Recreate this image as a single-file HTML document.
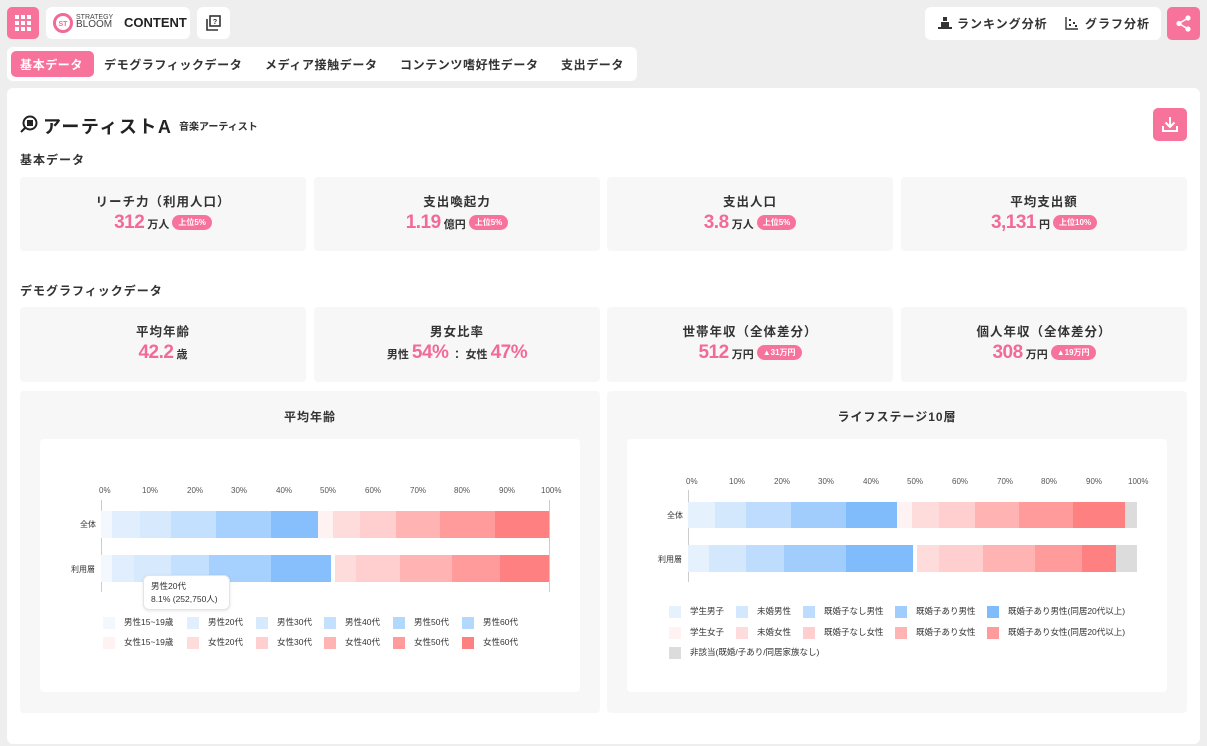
<!DOCTYPE html><html><head><meta charset="utf-8"><style>
*{margin:0;padding:0;box-sizing:border-box}
body{width:1207px;height:746px;background:#eeeeee;font-family:"Liberation Sans","Noto Sans CJK JP",sans-serif;color:#333;position:relative;overflow:hidden}
.a{position:absolute}
.pk{background:#f7739c;border-radius:5px}
.w{background:#fff;border-radius:6px}
.card{position:absolute;background:#f7f7f7;border-radius:4px;text-align:center}
.ct{font-size:12.5px;font-weight:bold;letter-spacing:1px;margin-top:14px}
.cv{margin-top:2px;font-size:11px;font-weight:bold;color:#333}
.cv b{color:#f26a96;font-size:19px;letter-spacing:-.5px}
.bd{display:inline-block;background:#f7739c;color:#fff;font-size:8px;border-radius:8px;padding:2px 6px;vertical-align:3px;margin-left:3px}
.ax{position:absolute;font-size:8px;color:#555;top:0}
.seg{position:absolute;height:100%;top:0}
.lg{position:absolute;font-size:8.5px;color:#333;white-space:nowrap}
.lg i{display:inline-block;width:12px;height:12px;vertical-align:middle;margin-right:9px}
</style></head><body>
<div class="a pk" style="left:7px;top:7px;width:32px;height:32px">
<svg width="32" height="32"><g fill="#fff"><rect x="8" y="8" width="4" height="4"/><rect x="14" y="8" width="4" height="4"/><rect x="20" y="8" width="4" height="4"/><rect x="8" y="14" width="4" height="4"/><rect x="14" y="14" width="4" height="4"/><rect x="20" y="14" width="4" height="4"/><rect x="8" y="20" width="4" height="4"/><rect x="14" y="20" width="4" height="4"/><rect x="20" y="20" width="4" height="4"/></g></svg></div>
<div class="a w" style="left:46px;top:7px;width:144px;height:32px">
<svg class="a" style="left:7px;top:6px" width="20" height="20"><circle cx="10" cy="10" r="8.5" fill="none" stroke="#f26a96" stroke-width="3"/><text x="10" y="13" font-size="7" text-anchor="middle" fill="#f26a96" font-family="Liberation Sans" font-weight="bold">ST</text></svg>
<div class="a" style="left:30px;top:7px;font-size:7px;line-height:7px;color:#444">STRATEGY<br><span style="font-size:10px">BLOOM</span></div>
<div class="a" style="left:78px;top:8px;font-size:13px;font-weight:bold;color:#222">CONTENT</div></div>
<div class="a w" style="left:197px;top:7px;width:33px;height:32px">
<svg class="a" style="left:9px;top:8px" width="16" height="16"><rect x="4" y="1" width="10" height="10" fill="none" stroke="#333" stroke-width="1.6"/><path d="M1 4v11h11" fill="none" stroke="#333" stroke-width="1.6"/><text x="9" y="9" font-size="7" text-anchor="middle" fill="#333" font-weight="bold">?</text></svg></div>
<div class="a w" style="left:925px;top:7px;width:236px;height:33px">
<svg class="a" style="left:13px;top:9px" width="14" height="14"><rect x="5" y="1" width="4" height="4" fill="#333"/><rect x="3" y="6" width="8" height="5" fill="#333"/><rect x="0" y="11" width="14" height="2" fill="#333"/></svg>
<div class="a" style="left:32px;top:8px;font-size:12px;font-weight:bold;letter-spacing:1px">ランキング分析</div>
<svg class="a" style="left:140px;top:9px" width="14" height="14"><path d="M1 1v12h12" fill="none" stroke="#333" stroke-width="1.4"/><g fill="#333"><rect x="4" y="3" width="2" height="2"/><rect x="4" y="8" width="2" height="2"/><rect x="8" y="6" width="2" height="2"/><rect x="10" y="9" width="2" height="2"/></g></svg>
<div class="a" style="left:160px;top:8px;font-size:12px;font-weight:bold;letter-spacing:1px">グラフ分析</div></div>
<div class="a pk" style="left:1167px;top:7px;width:33px;height:33px">
<svg width="33" height="33"><g fill="#fff"><circle cx="21" cy="11" r="2.6"/><circle cx="12" cy="16.5" r="2.6"/><circle cx="21" cy="22" r="2.6"/></g><path d="M21 11L12 16.5L21 22" stroke="#fff" stroke-width="1.6" fill="none"/></svg></div>
<div class="a w" style="left:7px;top:47px;width:630px;height:34px"></div>
<div class="a pk" style="left:11px;top:51px;width:83px;height:26px"></div>
<div class="a" style="left:20px;top:56px;font-size:12px;font-weight:bold;letter-spacing:.6px;color:#fff">基本データ</div>
<div class="a" style="left:104px;top:56px;font-size:12px;font-weight:bold;letter-spacing:.6px;color:#333">デモグラフィックデータ</div>
<div class="a" style="left:265px;top:56px;font-size:12px;font-weight:bold;letter-spacing:.6px">メディア接触データ</div>
<div class="a" style="left:400px;top:56px;font-size:12px;font-weight:bold;letter-spacing:.6px">コンテンツ嗜好性データ</div>
<div class="a" style="left:561px;top:56px;font-size:12px;font-weight:bold;letter-spacing:.6px">支出データ</div>
<div class="a w" style="left:7px;top:88px;width:1193px;height:656px"></div>
<svg class="a" style="left:20px;top:115px" width="18" height="18"><circle cx="10" cy="8" r="6.5" fill="none" stroke="#222" stroke-width="2"/><rect x="7" y="5" width="6" height="6" fill="#222"/><path d="M5 13L1 17" stroke="#222" stroke-width="2"/></svg>
<div class="a" style="left:43px;top:113px;font-size:18px;font-weight:bold;letter-spacing:1.5px;color:#222">アーティストA</div>
<div class="a" style="left:179px;top:118px;font-size:10px;font-weight:bold">音楽アーティスト</div>
<div class="a pk" style="left:1153px;top:108px;width:34px;height:33px">
<svg width="34" height="33"><path d="M17 9v10M12.5 14.5L17 19l4.5-4.5M10 18v5h14v-5" stroke="#fff" stroke-width="2" fill="none"/></svg></div>
<div class="a" style="left:20px;top:151px;font-size:12px;font-weight:bold;letter-spacing:1px">基本データ</div>
<div class="card" style="left:20px;top:177px;width:286px;height:74px"><div class="ct">リーチ力（利用人口）</div><div class="cv"><b>312</b> 万人<span class="bd">上位5%</span></div></div>
<div class="card" style="left:314px;top:177px;width:286px;height:74px"><div class="ct">支出喚起力</div><div class="cv"><b>1.19</b> 億円<span class="bd">上位5%</span></div></div>
<div class="card" style="left:607px;top:177px;width:286px;height:74px"><div class="ct">支出人口</div><div class="cv"><b>3.8</b> 万人<span class="bd">上位5%</span></div></div>
<div class="card" style="left:901px;top:177px;width:286px;height:74px"><div class="ct">平均支出額</div><div class="cv"><b>3,131</b> 円<span class="bd">上位10%</span></div></div>
<div class="a" style="left:20px;top:282px;font-size:12px;font-weight:bold;letter-spacing:1px">デモグラフィックデータ</div>
<div class="card" style="left:20px;top:307px;width:286px;height:75px"><div class="ct">平均年齢</div><div class="cv"><b>42.2</b> 歳</div></div>
<div class="card" style="left:314px;top:307px;width:286px;height:75px"><div class="ct">男女比率</div><div class="cv">男性 <b>54%</b> ： 女性 <b>47%</b></div></div>
<div class="card" style="left:607px;top:307px;width:286px;height:75px"><div class="ct">世帯年収（全体差分）</div><div class="cv"><b>512</b> 万円<span class="bd">▲31万円</span></div></div>
<div class="card" style="left:901px;top:307px;width:286px;height:75px"><div class="ct">個人年収（全体差分）</div><div class="cv"><b>308</b> 万円<span class="bd">▲19万円</span></div></div>
<div class="card" style="left:20px;top:391px;width:580px;height:322px"><div class="ct" style="margin-top:17px;font-size:12px">平均年齢</div></div>
<div class="card" style="left:607px;top:391px;width:580px;height:322px"><div class="ct" style="margin-top:17px;font-size:12px">ライフステージ10層</div></div>
<div class="a" style="left:40px;top:439px;width:540px;height:253px;background:#fff;border-radius:4px"></div>
<div class="a" style="left:627px;top:439px;width:540px;height:253px;background:#fff;border-radius:4px"></div>

<div class="a" style="left:0;top:486px">
<span class="ax" style="left:99px">0%</span><span class="ax" style="left:142px">10%</span><span class="ax" style="left:187px">20%</span><span class="ax" style="left:231px">30%</span><span class="ax" style="left:276px">40%</span><span class="ax" style="left:320px">50%</span><span class="ax" style="left:365px">60%</span><span class="ax" style="left:410px">70%</span><span class="ax" style="left:454px">80%</span><span class="ax" style="left:499px">90%</span><span class="ax" style="left:541px">100%</span></div>
<div class="a" style="left:101px;top:500px;width:1px;height:92px;background:#ccc"></div>
<div class="a" style="left:549px;top:500px;width:1px;height:92px;background:#ccc"></div>
<div class="a" style="left:80px;top:519px;font-size:8px">全体</div>
<div class="a" style="left:71px;top:564px;font-size:8px">利用層</div>
<div class="a" style="left:0;top:511px;height:27px;width:0">
<div class="seg" style="left:101px;width:11px;background:#f3f8ff"></div><div class="seg" style="left:112px;width:28px;background:#e1eefd"></div><div class="seg" style="left:140px;width:31px;background:#d6e9fd"></div><div class="seg" style="left:171px;width:45px;background:#c3e0fe"></div><div class="seg" style="left:216px;width:55px;background:#a6d0fd"></div><div class="seg" style="left:271px;width:47px;background:#86bffb"></div><div class="seg" style="left:318px;width:15px;background:#fff2f2"></div><div class="seg" style="left:333px;width:27px;background:#ffdcdc"></div><div class="seg" style="left:360px;width:36px;background:#ffcfcf"></div><div class="seg" style="left:396px;width:44px;background:#ffb3b3"></div><div class="seg" style="left:440px;width:55px;background:#ff9b9b"></div><div class="seg" style="left:495px;width:54px;background:#ff8080"></div></div>
<div class="a" style="left:0;top:555px;height:27px;width:0">
<div class="seg" style="left:101px;width:11px;background:#f3f8ff"></div><div class="seg" style="left:112px;width:22px;background:#e1eefd"></div><div class="seg" style="left:134px;width:37px;background:#d6e9fd"></div><div class="seg" style="left:171px;width:38px;background:#c3e0fe"></div><div class="seg" style="left:209px;width:62px;background:#a6d0fd"></div><div class="seg" style="left:271px;width:60px;background:#86bffb"></div><div class="seg" style="left:335px;width:21px;background:#ffdcdc"></div><div class="seg" style="left:356px;width:44px;background:#ffcfcf"></div><div class="seg" style="left:400px;width:52px;background:#ffb3b3"></div><div class="seg" style="left:452px;width:48px;background:#ff9b9b"></div><div class="seg" style="left:500px;width:49px;background:#ff8080"></div></div>
<div class="a" style="left:143px;top:575px;width:87px;height:35px;background:#fff;border:1px solid #e4e4e4;border-radius:6px;box-shadow:0 1px 3px rgba(0,0,0,.1);font-size:8.5px;line-height:13px;padding:4px 7px;color:#333">男性20代<br>8.1% (252,750人)</div>
<div class="lg" style="left:103px;top:616px"><i style="background:#f3f8ff"></i>男性15~19歳</div>
<div class="lg" style="left:187px;top:616px"><i style="background:#e1eefd"></i>男性20代</div>
<div class="lg" style="left:256px;top:616px"><i style="background:#d6e9fd"></i>男性30代</div>
<div class="lg" style="left:324px;top:616px"><i style="background:#c3e0fe"></i>男性40代</div>
<div class="lg" style="left:393px;top:616px"><i style="background:#b3d8fe"></i>男性50代</div>
<div class="lg" style="left:462px;top:616px"><i style="background:#b3d8fe"></i>男性60代</div>
<div class="lg" style="left:103px;top:636px"><i style="background:#fff2f2"></i>女性15~19歳</div>
<div class="lg" style="left:187px;top:636px"><i style="background:#ffdcdc"></i>女性20代</div>
<div class="lg" style="left:256px;top:636px"><i style="background:#ffcfcf"></i>女性30代</div>
<div class="lg" style="left:324px;top:636px"><i style="background:#ffb3b3"></i>女性40代</div>
<div class="lg" style="left:393px;top:636px"><i style="background:#ff9b9b"></i>女性50代</div>
<div class="lg" style="left:462px;top:636px"><i style="background:#ff8080"></i>女性60代</div>

<div class="a" style="left:587px;top:477px">
<span class="ax" style="left:99px">0%</span><span class="ax" style="left:142px">10%</span><span class="ax" style="left:187px">20%</span><span class="ax" style="left:231px">30%</span><span class="ax" style="left:276px">40%</span><span class="ax" style="left:320px">50%</span><span class="ax" style="left:365px">60%</span><span class="ax" style="left:410px">70%</span><span class="ax" style="left:454px">80%</span><span class="ax" style="left:499px">90%</span><span class="ax" style="left:541px">100%</span></div>
<div class="a" style="left:688px;top:490px;width:1px;height:92px;background:#ccc"></div>
<div class="a" style="left:667px;top:510px;font-size:8px">全体</div>
<div class="a" style="left:658px;top:554px;font-size:8px">利用層</div>
<div class="a" style="left:0;top:502px;height:26px;width:0">
<div class="seg" style="left:688px;width:27px;background:#e6f1fe"></div><div class="seg" style="left:715px;width:31px;background:#d3e7fd"></div><div class="seg" style="left:746px;width:45px;background:#bedcfe"></div><div class="seg" style="left:791px;width:55px;background:#a1cdfd"></div><div class="seg" style="left:846px;width:51px;background:#80bcfb"></div><div class="seg" style="left:897px;width:15px;background:#fff2f2"></div><div class="seg" style="left:912px;width:27px;background:#ffdcdc"></div><div class="seg" style="left:939px;width:36px;background:#ffcfcf"></div><div class="seg" style="left:975px;width:44px;background:#ffb3b3"></div><div class="seg" style="left:1019px;width:54px;background:#ff9b9b"></div><div class="seg" style="left:1073px;width:52px;background:#ff8080"></div><div class="seg" style="left:1125px;width:12px;background:#dcdcdc"></div></div>
<div class="a" style="left:0;top:545px;height:27px;width:0">
<div class="seg" style="left:688px;width:21px;background:#e6f1fe"></div><div class="seg" style="left:709px;width:37px;background:#d3e7fd"></div><div class="seg" style="left:746px;width:38px;background:#bedcfe"></div><div class="seg" style="left:784px;width:62px;background:#a1cdfd"></div><div class="seg" style="left:846px;width:67px;background:#80bcfb"></div><div class="seg" style="left:917px;width:22px;background:#ffdcdc"></div><div class="seg" style="left:939px;width:44px;background:#ffcfcf"></div><div class="seg" style="left:983px;width:52px;background:#ffb3b3"></div><div class="seg" style="left:1035px;width:47px;background:#ff9b9b"></div><div class="seg" style="left:1082px;width:34px;background:#ff8080"></div><div class="seg" style="left:1116px;width:21px;background:#dcdcdc"></div></div>
<div class="lg" style="left:669px;top:605px"><i style="background:#e6f1fe"></i>学生男子</div>
<div class="lg" style="left:736px;top:605px"><i style="background:#d3e7fd"></i>未婚男性</div>
<div class="lg" style="left:803px;top:605px"><i style="background:#bedcfe"></i>既婚子なし男性</div>
<div class="lg" style="left:895px;top:605px"><i style="background:#a1cdfd"></i>既婚子あり男性</div>
<div class="lg" style="left:987px;top:605px"><i style="background:#80bcfb"></i>既婚子あり男性(同居20代以上)</div>
<div class="lg" style="left:669px;top:626px"><i style="background:#fff2f2"></i>学生女子</div>
<div class="lg" style="left:736px;top:626px"><i style="background:#ffdcdc"></i>未婚女性</div>
<div class="lg" style="left:803px;top:626px"><i style="background:#ffcfcf"></i>既婚子なし女性</div>
<div class="lg" style="left:895px;top:626px"><i style="background:#ffb3b3"></i>既婚子あり女性</div>
<div class="lg" style="left:987px;top:626px"><i style="background:#ff9b9b"></i>既婚子あり女性(同居20代以上)</div>
<div class="lg" style="left:669px;top:646px"><i style="background:#dcdcdc"></i>非該当(既婚/子あり/同居家族なし)</div>
</body></html>
